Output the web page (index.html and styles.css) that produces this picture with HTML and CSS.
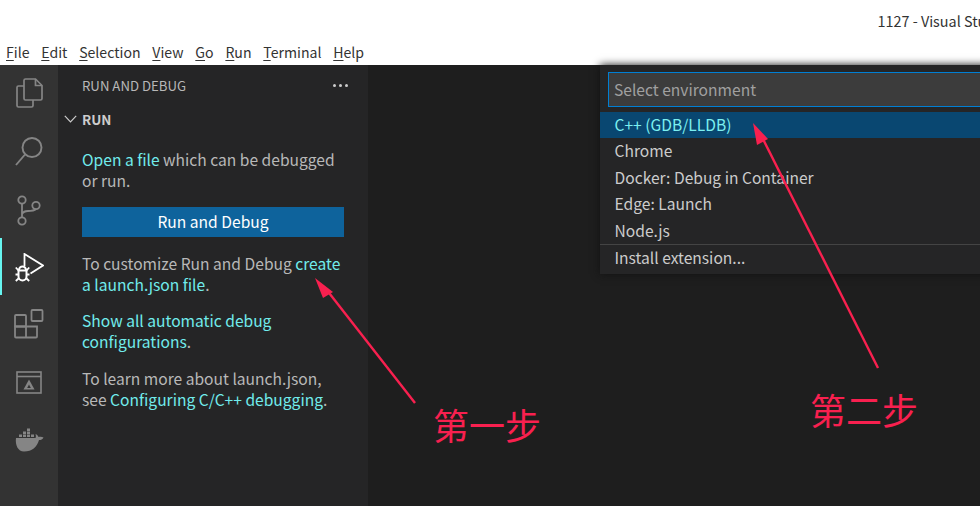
FILE: index.html
```html
<!DOCTYPE html>
<html lang="en">
<head>
<meta charset="utf-8">
<title>Run and Debug</title>
<link rel="stylesheet" href="styles.css">
</head>
<body>
<div class="app">
  <header class="titlebar">
    <div class="title">1127 - Visual Studio Code</div>
    <nav class="menu">
      <span><u>F</u>ile</span><span><u>E</u>dit</span><span><u>S</u>election</span><span><u>V</u>iew</span><span><u>G</u>o</span><span><u>R</u>un</span><span><u>T</u>erminal</span><span><u>H</u>elp</span>
    </nav>
  </header>
  <main class="workbench">
    <aside class="activity">
      <div class="act act-files"><svg width="27" height="30" viewBox="0 0 27 30" fill="none" stroke="#858585" stroke-width="1.700"><path d="M9.500 1h10l6.500 6.500v13a1.500 1.500 0 0 1-1.500 1.500h-15A1.500 1.500 0 0 1 8 20.500v-18A1.500 1.500 0 0 1 9.500 1z"/><path d="M19.500 1v6.500H26"/><path d="M8 8H2.500A1.500 1.500 0 0 0 1 9.500v18A1.500 1.500 0 0 0 2.500 29h13a1.500 1.500 0 0 0 1.500-1.500V22"/></svg></div>
      <div class="act act-search"><svg width="28" height="29" viewBox="0 0 28 29" fill="none" stroke="#858585" stroke-width="1.900"><circle cx="17" cy="10.500" r="9.500"/><path d="M10 17.500L1 28"/></svg></div>
      <div class="act act-scm"><svg width="24" height="31" viewBox="0 0 24 31" fill="none" stroke="#858585" stroke-width="1.800"><circle cx="5" cy="5" r="3.700"/><circle cx="5" cy="26" r="3.700"/><circle cx="19" cy="10.500" r="3.700"/><path d="M5 8.700v13.600M5 19c1-2 3-3 6-3 4 0 7-1 8-2"/></svg></div>
      <div class="act act-debug active"><svg width="29" height="29" viewBox="0 0 29 29" fill="none" stroke="#fff" stroke-width="1.800"><path d="M9.500 13V1L28 12.500 15.500 20.500"/><path d="M4 17a3.500 3.500 0 0 1 7 0" stroke-width="2"/><path d="M3.500 17.500h8v6a4 4 0 0 1-8 0z" stroke-width="2"/><path d="M.8 14.500l2.700 3M14.200 14.500l-2.700 3M.5 21.500h3M11.500 21.500h3M.8 28l2.700-2.500M14.200 28l-2.700-2.500" stroke-width="1.800"/></svg></div>
      <div class="act act-ext"><svg width="30" height="30" viewBox="0 0 30 30" fill="none" stroke="#858585" stroke-width="1.800"><rect x="1" y="6" width="11" height="11.500" rx="1"/><path d="M1 17.500h11v11H2a1 1 0 0 1-1-1zM12 17.500h11v10a1 1 0 0 1-1 1H12z"/><rect x="17.500" y="1" width="11" height="11" rx="1"/></svg></div>
      <div class="act act-remote"><svg width="26" height="23" viewBox="0 0 26 23" fill="none"><rect x="1" y="1" width="24" height="21" stroke="#858585" stroke-width="1.600"/><path d="M1 5.500h24" stroke="#858585" stroke-width="1.600"/><path d="M13 8.500l5.500 10h-11z" fill="#858585"/><path d="M13 13.500l1.800 3.500h-3.600z" fill="#333"/></svg></div>
      <div class="act act-docker"><svg width="29" height="24" viewBox="0 0 29 24" fill="#858585"><path d="M1 10h19.500c.5-1 .5-2.500 0-4 1.500.5 2.500 1.500 3 3 1.500-.5 3.500-.5 5 .5-1 2-2.500 2.500-4.500 2.500C22 19 17 23.500 9 23.500 3 23.500 0 17 1 10z"/><path d="M4 6.500h3V9H4zM8 6.500h3V9H8zM12 6.500h3V9h-3zM16 6.500h3V9h-3zM8 3.500h3V6H8zM12 3.500h3V6h-3zM12 .5h3V3h-3z"/></svg></div>
    </aside>
    <section class="sidebar">
      <div class="side-head"><span>RUN AND DEBUG</span><span class="dots"><i></i><i></i><i></i></span></div>
      <div class="section-head"><svg width="13" height="8" viewBox="0 0 13 8" fill="none" stroke="#ccc" stroke-width="1.200"><path d="M.8.8l5.700 6 5.700-6"/></svg><b>RUN</b></div>
      <div class="welcome">
        <p><a>Open a file</a> which can be debugged or run.</p>
        <button class="run-btn">Run and Debug</button>
        <p>To customize Run and Debug <a>create a launch.json file</a>.</p>
        <p><a>Show all automatic debug configurations</a>.</p>
        <p>To learn more about launch.json, see <a>Configuring C/C++ debugging</a>.</p>
      </div>
    </section>
    <section class="editor">
      <div class="quickpick">
        <div class="qp-input">Select environment</div>
        <ul class="qp-list">
          <li class="selected">C++ (GDB/LLDB)</li>
          <li>Chrome</li>
          <li>Docker: Debug in Container</li>
          <li>Edge: Launch</li>
          <li>Node.js</li>
          <li class="sep">Install extension...</li>
        </ul>
      </div>
    </section>
  </main>
  <svg class="arrows" width="980" height="506" viewBox="0 0 980 506" fill="none">
    <path d="M415 403L326 289" stroke="#f8204f" stroke-width="2.400"/>
    <path d="M315 278L333 292 323 298z" fill="#f8204f"/>
    <path d="M878 368L762 137" stroke="#f8204f" stroke-width="2.400"/>
    <path d="M753 123L768 139 757 145z" fill="#f8204f"/>
  </svg>
  <div class="note note-one">第一步</div>
  <div class="note note-two">第二步</div>
</div>
</body>
</html>
```

FILE: styles.css
```css
* { box-sizing: border-box; }
html, body { margin: 0; padding: 0; }
body { font-family: "Noto Sans CJK SC", "Noto Sans", sans-serif; background: #fff; overflow: hidden; }
.app { position: relative; width: 980px; height: 506px; overflow: hidden; display: flex; flex-direction: column; }

.titlebar { height: 65px; background: #fff; color: #333; flex: none; display: flex; flex-direction: column; }
.title { height: 42px; padding: 11px 0 0 877.500px; font-size: 14.400px; line-height: 20px; white-space: nowrap; overflow: hidden; }
.menu { display: flex; padding-left: 6px; gap: 11.800px; font-size: 14.100px; line-height: 20px; color: #333; }
.menu u { text-underline-offset: 2px; }

.workbench { flex: 1; display: flex; min-height: 0; }

.activity { width: 58px; flex: none; background: #333; display: flex; flex-direction: column; align-items: center; }
.act { display: flex; justify-content: center; width: 100%; }
.act-files { margin-top: 13px; }
.act-search { margin-top: 29px; }
.act-scm { margin-top: 29px; padding-right: 1px; }
.act-debug { margin-top: 27px; padding-left: 1px; position: relative; }
.act-debug.active::before { content: ""; position: absolute; left: 0; top: -15px; width: 2px; height: 57px; background: #66f5f0; }
.act-ext { margin-top: 27px; }
.act-remote { margin-top: 32px; }
.act-docker { margin-top: 34px; }

.sidebar { width: 310px; flex: none; background: #252526; color: #bbb; }
.side-head { height: 41px; padding: 0 20px 0 24px; display: flex; justify-content: space-between; align-items: center; font-size: 13.200px; color: #b8b8b8; }
.dots { display: flex; gap: 3px; }
.dots i { width: 3px; height: 3px; border-radius: 50%; background: #ccc; }
.section-head { height: 24px; margin-top: 1px; padding-left: 6px; display: flex; align-items: center; gap: 5px; font-size: 13.500px; color: #ccc; }
.section-head b { font-weight: 700; }
.welcome { padding: 18px 24px 0; font-size: 15.600px; line-height: 21px; color: #b8b8b8; }
.welcome p { margin: 0 0 15.500px; }
.welcome a { color: #71ecec; }
.run-btn { display: block; width: 100%; height: 30px; margin: 0 0 16px; padding: 0 0 1px; border: 0; background: #0e639c; color: #fff; font: inherit; }

.editor { flex: 1; background: #1e1e1e; min-width: 0; position: relative; }
.quickpick { position: absolute; left: 232px; top: 0; width: 420px; height: 209px; background: #252526; box-shadow: 0 0 8px #111; color: #ccc; padding-top: 7px; }
.qp-input { margin-left: 8px; height: 35px; border: 1px solid #007fd4; background: #3c3c3c; color: #a0a0a0; padding-left: 5px; font-size: 15.600px; line-height: 33px; }
.qp-list { list-style: none; margin: 5px 0 0; padding: 0; font-size: 15.600px; }
.qp-list li { height: 26.500px; line-height: 25px; padding-left: 14.500px; }
.qp-list .selected { height: 26px; background: #094771; color: #7cf0f0; }
.qp-list .sep { border-top: 1px solid #444; }

.arrows { position: absolute; left: 0; top: 0; pointer-events: none; }
.note { position: absolute; font-size: 36px; line-height: 44px; color: #f8204f; }
.note-one { left: 433px; top: 402px; }
.note-two { left: 810px; top: 387px; }
```
